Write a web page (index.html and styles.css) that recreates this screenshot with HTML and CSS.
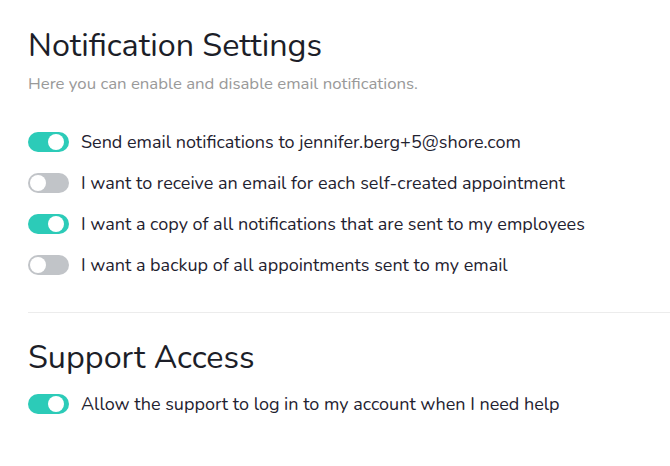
FILE: index.html
```html
<!DOCTYPE html>
<html>
<head>
<meta charset="utf-8">
<link rel="stylesheet" href="styles.css">
</head>
<body>
<div class="page">
  <section class="section">
    <h1 class="title">Notification Settings</h1>
    <p class="subtitle">Here you can enable and disable email notifications.</p>
    <ul class="options">
      <li class="option"><span class="toggle on"><span class="knob"></span></span><span class="label">Send email notifications to jennifer.berg+5@shore.com</span></li>
      <li class="option"><span class="toggle"><span class="knob"></span></span><span class="label">I want to receive an email for each self-created appointment</span></li>
      <li class="option"><span class="toggle on"><span class="knob"></span></span><span class="label">I want a copy of all notifications that are sent to my employees</span></li>
      <li class="option"><span class="toggle"><span class="knob"></span></span><span class="label">I want a backup of all appointments sent to my email</span></li>
    </ul>
  </section>
  <hr class="divider">
  <section class="section">
    <h1 class="title second">Support Access</h1>
    <ul class="options">
      <li class="option"><span class="toggle on"><span class="knob"></span></span><span class="label">Allow the support to log in to my account when I need help</span></li>
    </ul>
  </section>
</div>
</body>
</html>
```
FILE: styles.css
```css
html, body {
  margin: 0;
  padding: 0;
  background: #fff;
}
body {
  font-family: "Nunito", "Open Sans", "Noto Sans", sans-serif;
  color: #1f2230;
}
.page {
  padding: 25px 0 0 28px;
}
.title {
  margin: 0;
  font-size: 32.3px;
  font-weight: 400;
  line-height: 40px;
  color: #1c1e28;
}
.title.second {
  margin-top: 24px;
}
.subtitle {
  margin: 9px 0 0;
  font-size: 16.8px;
  line-height: 20px;
  color: #999;
}
.options {
  list-style: none;
  margin: 0;
  padding: 0;
  margin-top: 38px;
  display: flex;
  flex-direction: column;
  gap: 21px;
}
.second + .options {
  margin-top: 17px;
}
.option {
  display: flex;
  align-items: center;
  gap: 12px;
  height: 20px;
}
.label {
  font-size: 18px;
  line-height: 20px;
  color: #1f2230;
}
.toggle {
  position: relative;
  flex: none;
  width: 41px;
  height: 20px;
  border-radius: 10px;
  background: #c1c4c8;
}
.toggle.on {
  background: #2ccbb8;
}
.knob {
  position: absolute;
  top: 2px;
  left: 2px;
  width: 16px;
  height: 16px;
  border-radius: 50%;
  background: #fff;
}
.toggle.on .knob {
  left: auto;
  right: 5px;
}
.divider {
  border: 0;
  border-top: 1px solid #ececec;
  margin: 37px 0 0;
}
```
